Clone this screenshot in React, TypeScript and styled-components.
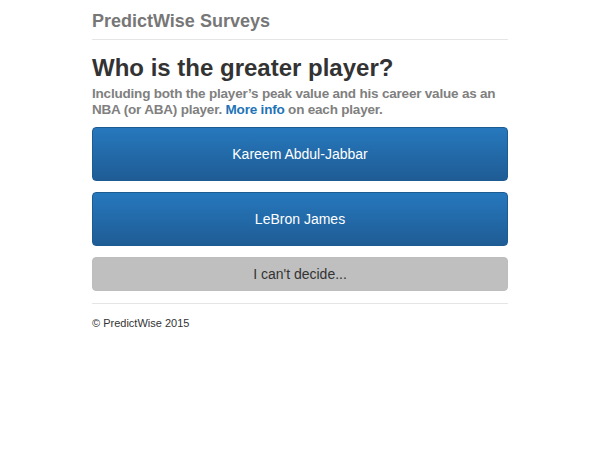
import styled, { createGlobalStyle } from "styled-components";

const Global = createGlobalStyle`
  body {
    margin: 0;
    background: #fff;
    font-family: "Liberation Sans", Arial, sans-serif;
  }
`;

const Container = styled.div`
  width: 416px;
  margin: 0 auto;
  padding-top: 11px;
`;

const Header = styled.div`
  border-bottom: 1px solid #e5e5e5;
  padding-bottom: 8px;
`;

const Brand = styled.h3`
  margin: 0;
  font-size: 18px;
  font-weight: bold;
  color: #777;
  line-height: 20px;
`;

const Title = styled.h2`
  margin: 14px 0 0;
  font-size: 24px;
  font-weight: bold;
  color: #333;
  line-height: 28px;
`;

const Lead = styled.p`
  margin: 4px 0 0;
  font-size: 13.5px;
  font-weight: bold;
  letter-spacing: -0.2px;
  color: #808080;
  line-height: 16px;
`;

const LeadLine = styled.span`
  display: block;
  white-space: nowrap;
`;

const Link = styled.a`
  color: #1f73b7;
  text-decoration: none;
`;

const Choices = styled.div`
  display: flex;
  flex-direction: column;
  gap: 11px;
  margin-top: 9px;
`;

const Choice = styled.button<{ $muted?: boolean }>`
  display: block;
  width: 100%;
  height: ${(p) => (p.$muted ? "34px" : "54px")};
  border-radius: 4px;
  border: 1px solid ${(p) => (p.$muted ? "#bdbdbd" : "#1d5b93")};
  background: ${(p) =>
    p.$muted ? "#bfbfbf" : "linear-gradient(#2678bd, #1f5c95)"};
  color: ${(p) => (p.$muted ? "#333" : "#fff")};
  font-family: "Liberation Sans", Arial, sans-serif;
  font-size: 14px;
  cursor: pointer;
`;

const Footer = styled.div`
  margin-top: 12px;
  border-top: 1px solid #e5e5e5;
  padding-top: 13px;
  font-size: 11px;
  color: #333;
`;

export default function App() {
  return (
    <>
      <Global />
      <Container>
        <Header>
          <Brand>PredictWise Surveys</Brand>
        </Header>
        <Title>Who is the greater player?</Title>
        <Lead>
          <LeadLine>
            Including both the player’s peak value and his career value as an
          </LeadLine>
          <LeadLine>
            NBA (or ABA) player. <Link href="#">More info</Link> on each player.
          </LeadLine>
        </Lead>
        <Choices>
          <Choice>Kareem Abdul-Jabbar</Choice>
          <Choice>LeBron James</Choice>
          <Choice $muted>I can't decide...</Choice>
        </Choices>
        <Footer>© PredictWise 2015</Footer>
      </Container>
    </>
  );
}
